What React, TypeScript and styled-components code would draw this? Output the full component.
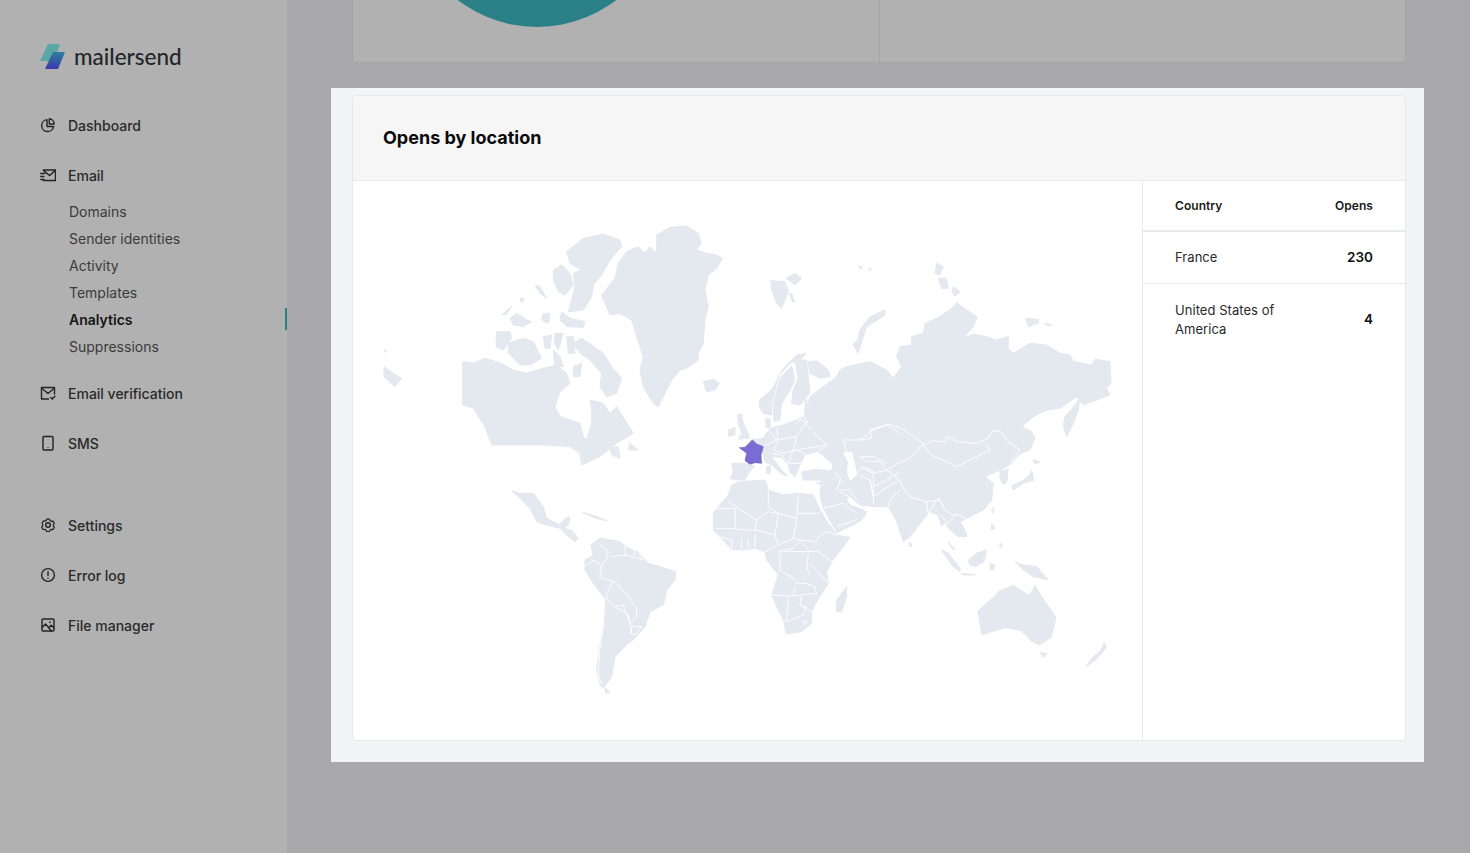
import React from 'react';
import styled, { createGlobalStyle } from 'styled-components';

const GlobalStyle = createGlobalStyle`
  html, body {
    margin: 0;
    padding: 0;
    height: 100%;
    background: #a9a9ab;
    font-family: Inter, 'Liberation Sans', sans-serif;
  }
  #root { height: 100%; }
`;

// map shapes are traced per region, each with its own offset/scale
interface Region {
  transform: string;
  land: string[];
  water?: string[];
  borders?: string[];
}

const regions: Region[] = [
  {
    // north america + greenland
    transform: 'translate(370 210) scale(0.3333)',
    land: [
      '278,455 310,460 345,445 395,460 430,480 470,490 520,475 560,465 590,490 600,520 570,545 555,590 570,620 630,640 640,680 650,690 665,640 665,600 660,570 700,580 720,610 740,590 790,670 740,700 690,740 635,765 630,730 600,710 520,705 365,705 345,650 310,595 278,585',
      '860,75 900,52 950,48 985,70 995,100 980,120 1010,130 1040,135 1058,145 1040,175 1015,195 1005,240 1015,290 1005,330 1000,400 985,430 985,450 950,475 930,480 905,510 885,550 865,590 850,580 820,530 810,480 820,440 800,380 785,330 750,310 720,315 705,280 695,255 735,205 745,160 770,125 805,110 825,130 840,110 860,130',
      '590,125 640,85 700,72 750,90 755,110 720,150 695,195 670,225 665,260 640,300 595,305 605,270 615,230 610,190 635,180 600,160',
      '635,385 665,405 700,430 725,470 755,505 740,550 710,560 690,530 695,490 660,450 630,430 610,400',
      '550,180 575,165 600,190 610,225 585,255 565,245 550,210',
      '415,400 460,385 490,395 515,445 480,465 450,465 415,430',
      '380,365 420,365 425,385 400,420 378,410',
      '420,325 440,310 470,330 485,335 460,350 430,345',
      '395,315 425,288 410,312',
      '575,305 600,325 645,335 640,352 590,350 570,330',
      '520,310 540,310 535,340 515,330',
      '520,380 545,375 540,415 525,415',
      '555,370 580,370 565,420 553,400',
      '590,380 610,378 615,430 595,430',
      '495,225 510,230 530,265 510,250',
      '450,265 462,265 455,280',
      '550,420 570,440 580,470 555,470',
      '610,470 635,460 630,500 610,500',
      '1000,515 1030,508 1048,520 1035,540 1010,545',
      '42,470 70,490 95,505 75,530 42,500',
      '42,420 50,420 48,428',
      '720,715 745,710 750,745 725,735',
      '780,700 805,720 775,720',
    ],
  },
  {
    // russia and the arctic islands
    transform: 'translate(730 210) scale(0.3333)',
    land: [
      '225,600 240,560 300,515 320,500 330,480 350,470 420,455 470,480 490,505 515,470 500,440 510,410 545,405 545,380 580,370 585,340 630,320 665,295 680,278 710,300 742,320 730,350 700,385 730,372 770,380 800,390 835,380 835,415 850,430 900,400 950,405 990,430 1020,435 1030,455 1085,465 1095,448 1140,455 1143,520 1130,535 1140,555 1060,585 1040,560 990,595 950,600 910,620 875,650 860,720 225,720',
      '465,300 420,320 390,360 385,385 370,405 385,430 395,395 410,350 465,315',
      '122,212 165,215 175,245 155,295 140,280 125,240',
      '168,205 195,190 215,205 195,225',
      '178,250 186,252 194,276 188,276',
      '385,168 397,172 392,178',
      '418,175 425,178 420,183',
      '620,160 640,170 630,195 615,190',
      '625,205 650,205 655,235 635,235',
      '670,230 690,245 675,258 665,245',
      '888,325 925,328 925,340 895,350',
      '945,340 965,345 948,346',
      '1040,580 1050,555 1045,600 1030,640 1010,680 1000,650 1005,620',
    ],
  },
  {
    // europe
    transform: 'translate(700 340) scale(0.3333)',
    land: [
      '112,225 125,222 128,245 145,280 148,295 115,298 125,280 115,250',
      '85,270 105,262 105,285 85,288',
      '178,180 215,150 250,85 290,45 320,40 300,60 270,70 235,110 215,190 215,225 190,220 178,200',
      '220,190 240,115 275,78 285,120 270,150 245,190 240,240 222,245',
      '285,60 320,60 325,110 330,160 300,195 275,190 280,150 295,115',
      '325,65 350,62 385,90 390,110 360,115 330,100',
      '198,235 212,238 210,262 198,262',
      '150,300 190,295 210,265 250,255 290,240 315,225 322,190 420,190 440,330 420,385 395,385 370,345 350,335 315,345 300,375 285,410 270,395 265,375 245,352 215,350 190,345',
      '95,370 130,370 165,378 145,400 135,420 105,420 90,415 100,395',
      '190,345 215,350 245,390 262,408 245,402 215,375 195,365',
      '305,395 350,388 405,395 440,385 450,425 405,425 350,420 310,420',
      '200,380 212,380 210,402 200,400',
      '350,428 375,428 365,435',
    ],
    water: ['318,352 340,345 355,355 380,358 396,372 396,388 340,385 308,388'],
    borders: [
      '205,270 230,300 190,320',
      '230,300 290,290 315,250 335,270',
      '230,265 235,305 220,330 250,340 290,330 380,315 355,335',
      '290,290 280,330 265,370 310,370 320,345 290,330',
      '215,340 245,345 265,370',
      '300,240 325,250 310,225 285,255',
      '340,275 380,315',
      '322,190 330,160',
      '445,355 430,300 480,300 520,270 560,255 600,280',
      '405,395 430,430',
      '420,420 410,450 455,475',
      '480,350 520,350 560,370',
      '470,400 490,380 520,395 520,440',
      '520,470 520,440 560,420 600,395',
    ],
  },
  {
    // africa + arabia
    transform: 'translate(700 480) scale(0.3333)',
    land: [
      '40,100 50,85 85,45 95,15 120,5 195,0 205,30 250,45 295,40 340,45 360,90 385,130 410,165 450,172 430,200 395,245 380,275 385,310 350,365 335,395 335,430 305,455 260,462 250,420 230,380 215,345 235,285 200,240 195,215 165,205 130,210 95,208 60,170 40,150',
      '440,320 440,350 425,395 410,395 410,360',
      '360,45 420,30 450,75 490,90 498,105 470,130 410,158 395,130 370,85',
      '360,45 365,0 450,0 470,30 460,55 420,30',
    ],
    borders: [
      '85,65 170,120 205,95 235,100',
      '205,30 205,80 235,100 290,115 295,40',
      '295,100 360,100',
      '290,115 280,175 300,180 350,185',
      '235,100 225,165 235,195 280,175',
      '170,120 165,150 130,150 95,145 45,145',
      '105,85 105,145',
      '50,85 105,85',
      '165,150 225,165',
      '60,170 95,180 95,208',
      '125,175 125,208',
      '145,175 145,205',
      '165,205 165,160',
      '195,215 235,195',
      '235,215 280,205 300,180',
      '300,180 330,215 355,215 395,245',
      '350,185 355,170 380,155 410,165',
      '240,220 250,215 330,215',
      '325,220 320,265 330,285',
      '240,270 250,280 275,290 290,310 315,310',
      '215,345 280,348 285,320',
      '225,285 240,270 240,225',
      '330,250 385,310',
      '315,310 345,320 350,345',
      '280,348 305,345 345,340',
      '265,350 260,420 250,425',
      '305,380 335,395',
      '305,345 300,375 320,380 310,405 260,425',
      '309,427 315,421 322,427 315,434 309,427',
      '370,85 430,70 470,100',
      '420,30 450,30 470,60',
      '410,140 470,120',
    ],
  },
  {
    // south and central america
    transform: 'translate(500 480) scale(0.3333)',
    land: [
      '300,175 335,180 360,185 385,205 415,215 445,250 480,260 527,275 525,300 500,330 490,375 450,395 435,440 400,480 385,490 360,515 345,530 335,590 310,625 300,615 290,570 298,510 310,440 315,355 280,310 255,270 255,240 280,225 272,195',
      '315,625 330,635 318,640',
      '35,32 60,40 100,40 130,80 140,115 180,135 195,115 210,110 205,135 190,145 215,150 235,175 225,185 200,165 180,145 140,135 110,125 90,85 60,55',
      '248,97 285,108 320,122 285,114',
    ],
    borders: [
      '300,195 325,215 320,235 300,265 305,295 345,305 385,350 410,385 410,410 390,430 370,375 340,380 320,355 318,345 340,305',
      '255,260 280,240 310,260',
      '335,230 375,225 375,195',
      '375,225 400,230 430,240 415,215',
      '315,355 310,440 298,520 295,590 305,610',
      '345,380 385,405 390,430 395,460',
      '395,440 425,440 405,465 392,460 395,440',
      '400,205 405,225',
    ],
  },
  {
    // asia
    transform: 'translate(860 400) scale(0.3333)',
    land: [
      '-165,30 -75,240 -50,240 -60,310 -30,290 0,315 50,320 85,320 110,365 130,425 150,410 205,340 210,335 235,345 245,380 255,365 265,385 295,410 320,410 320,400 300,365 330,350 370,330 395,300 400,250 375,230 420,210 455,190 480,160 510,150 525,115 515,95 485,80 520,30 570,25 560,0 -165,0',
      '515,210 522,240 490,250 460,270 455,258 490,240 510,225',
      '520,180 540,185 525,192',
      '420,210 445,205 440,245 430,255 420,235',
      '395,328 402,322 398,340',
      '395,370 405,385 395,390',
      '420,430 428,435 420,445',
      '245,450 265,460 300,505 300,515 275,495',
      '305,520 345,525 310,525',
      '325,480 350,460 380,450 372,485 345,500 330,495',
      '390,490 405,495 400,510 392,510',
      '465,485 490,495 530,500 565,540 520,530 490,510',
      '265,425 285,450 275,445',
      '150,425 156,440 148,440',
      '-10,335 20,335 5,360 -10,365',
    ],
    water: ['-51,156 -24,156 -15,189 -9,225 -30,243 -39,216 -36,186'],
    borders: [
      '190,135 220,122 255,125 265,110 290,125 350,130 385,115 395,95 420,92 445,125 480,150 460,175 455,190',
      '190,135 215,165 290,200 340,175 390,150 375,130',
      '0,120 35,115 30,90 85,72 125,85 190,130 150,175 115,190 80,210',
      '0,170 20,185 60,185 80,210 120,240 130,265 150,290 200,305 240,300 255,330 280,345 300,345 320,360',
      '425,210 445,205',
      '30,240 40,290 85,260 120,240',
      '0,225 30,240 40,290 40,315',
      '85,320 90,300 120,270',
      '200,305 205,340 235,295 250,320',
      '240,345 265,370 290,340',
      '0,200 40,220 80,210',
    ],
  },
  {
    // australia and new zealand, this crop has its own scale
    transform: 'translate(500 470) scale(0.395 0.335)',
    land: [
      '1210,420 1245,385 1265,360 1300,345 1320,360 1340,375 1355,345 1375,385 1408,440 1395,500 1365,522 1345,510 1320,480 1280,470 1220,492',
      '1368,545 1385,548 1375,560',
      '1530,515 1535,530 1510,565 1482,588 1500,560 1520,540',
    ],
  },
];

const france = '118,323 135,322 157,300 170,312 190,320 183,345 185,370 165,368 150,373 135,362 140,340';

const Page = styled.div`
  display: flex;
  height: 853px;
  overflow: hidden;
  background: #a9a9ab;
`;

const Sidebar = styled.aside`
  flex: 0 0 287px;
  box-sizing: border-box;
  padding-left: 40px;
  background: #b1b1b1;
`;

const Logo = styled.div`
  display: flex;
  align-items: center;
  gap: 9px;
  height: 100px;
  padding-top: 13px;
  box-sizing: border-box;
`;

const LogoText = styled.span`
  font-family: Lato, Inter, sans-serif;
  font-size: 22.5px;
  font-weight: 500;
  color: #22252b;
`;

const NavItem = styled.div`
  display: flex;
  align-items: center;
  gap: 12px;
  height: 50px;
  font-size: 14px;
  font-weight: 500;
  color: #2a2a2a;
`;

const NavIcon = styled.svg`
  flex: 0 0 16px;
  width: 16px;
  height: 16px;
  fill: none;
  stroke: #232323;
  stroke-width: 1.4;
  stroke-linecap: round;
  stroke-linejoin: round;
`;

const SubList = styled.div`
  margin: -2px 0 8px;
`;

const SubItem = styled.div<{ $active?: boolean }>`
  position: relative;
  height: 27px;
  line-height: 27px;
  padding-left: 29px;
  font-size: 14px;
  font-weight: ${({ $active }) => ($active ? 600 : 400)};
  color: ${({ $active }) => ($active ? '#151515' : '#3b3b3b')};

  ${({ $active }) =>
    $active &&
    `&::after {
      content: '';
      position: absolute;
      top: 2px;
      right: 0;
      width: 2px;
      height: 22px;
      background: #2b8087;
    }`}
`;

const NavGap = styled.div`
  height: 32px;
`;

const Main = styled.main`
  flex: 1;
  padding-left: 44px;
`;

const TopCard = styled.section`
  display: flex;
  box-sizing: border-box;
  width: 1054px;
  height: 63px;
  margin-left: 21px;
  background: #b1b1b1;
  border: 1px solid #a3a3a3;
  border-top: none;
  border-radius: 0 0 4px 4px;
`;

const TopCell = styled.div`
  flex: 0 0 527px;
  box-sizing: border-box;
  padding-left: 104px;
  border-right: 1px solid #a5a5a5;
`;

const Circle = styled.svg`
  display: block;
  width: 160px;
  height: 28px;
`;

const Highlight = styled.div`
  box-sizing: border-box;
  width: 1093px;
  height: 674px;
  margin-top: 25px;
  padding: 7px 18px 21px 21px;
  background: #f3f4f6;
`;

const Card = styled.section`
  display: flex;
  flex-direction: column;
  box-sizing: border-box;
  height: 646px;
  border: 1px solid #e5e7eb;
  border-radius: 4px;
  background: #fff;
  overflow: hidden;
`;

const CardHeader = styled.header`
  display: flex;
  align-items: center;
  flex: 0 0 85px;
  box-sizing: border-box;
  padding: 0 30px 2px;
  background: #f6f6f7;
  border-bottom: 1px solid #e8e9ec;
`;

const CardTitle = styled.h2`
  margin: 0;
  font-size: 18px;
  font-weight: 700;
  color: #0b0b0b;
`;

const CardBody = styled.div`
  display: flex;
  flex: 1;
  min-height: 0;
`;

const MapPane = styled.div`
  flex: 0 0 789px;
`;

const MapSvg = styled.svg`
  display: block;
  width: 789px;
  height: 560px;
`;

const Land = styled.polygon`
  fill: #e4e8ef;
  stroke: #e4e8ef;
  stroke-width: 1;
  stroke-linejoin: round;
  vector-effect: non-scaling-stroke;
`;

const Water = styled.polygon`
  fill: #fff;
`;

const Border = styled.polyline`
  fill: none;
  stroke: #fff;
  stroke-width: 0.9;
  stroke-linejoin: round;
  vector-effect: non-scaling-stroke;
`;

const France = styled.polygon`
  fill: #7b6cd3;
  stroke: #5f52ad;
  stroke-width: 0.5;
  vector-effect: non-scaling-stroke;
`;

const TablePane = styled.div`
  flex: 1;
  border-left: 1px solid #e8e9ec;
`;

const Row = styled.div<{ $height: number; $thick?: boolean }>`
  display: flex;
  align-items: center;
  justify-content: space-between;
  box-sizing: border-box;
  height: ${({ $height }) => $height}px;
  padding: 0 32px;
  border-bottom: ${({ $thick }) => ($thick ? '2px' : '1px')} solid #e8e9ec;
  font-size: 13px;
  letter-spacing: 0.05px;
  line-height: 19px;
  color: #2a2a2a;
`;

const LastRow = styled(Row)`
  border-bottom: none;
`;

const HeadCell = styled.span`
  font-size: 12px;
  font-weight: 600;
  color: #1a1a1a;
`;

const Country = styled.span`
  max-width: 120px;
`;

const Count = styled.span`
  font-size: 13.5px;
  font-weight: 600;
  color: #111;
`;

const MailerLogo = () => (
  <svg width="25" height="26" viewBox="0 0 25 26">
    <defs>
      <linearGradient id="logoLow" x1="0" y1="0" x2="0" y2="1">
        <stop offset="0" stopColor="#2b7f9c" />
        <stop offset="1" stopColor="#3a39ad" />
      </linearGradient>
    </defs>
    <polygon points="8,0 20,0 14,17 0,17" fill="#59a8a5" />
    <polygon points="13,8 25,8 18,25 5,25" fill="url(#logoLow)" />
  </svg>
);

const navIcons: Record<string, React.ReactNode> = {
  dashboard: (
    <>
      <path d="M7 2.6a6 6 0 1 0 6.6 6.9H7z" />
      <path d="M9.3 1.8a5.4 5.4 0 0 1 4.9 5.2H9.3z" />
    </>
  ),
  email: (
    <>
      <path d="M3.5 3h12v10.5h-12" />
      <path d="M3.5 3.4 9.5 8.5l6-5.1" />
      <path d="M.8 6.5h4M.8 9.5h3M.8 12.5h3" />
    </>
  ),
  verify: (
    <>
      <path d="M8.5 14H1.5V2.5h13V9" />
      <path d="M1.5 3 8 8.5 14.5 3" />
      <path d="m10.8 12.6 1.5 1.5 2.6-2.8" />
    </>
  ),
  sms: (
    <>
      <rect x="3" y="1.5" width="10" height="13.5" rx="1" />
      <path d="M8 12.6h.01" />
    </>
  ),
  settings: (
    <>
      <path d="M6.3 1.6h3.4l.6 1.7 1.8 1 1.8-.3 1.6 2.8-1.2 1.3v1.8l1.2 1.3-1.6 2.8-1.8-.3-1.8 1-.6 1.5H6.3l-.6-1.6-1.8-1-1.8.3-1.6-2.8 1.2-1.3V7.9L1 6.6l1.6-2.8 1.8.3 1.8-1z" transform="translate(1.2 .7) scale(.85)" />
      <circle cx="8" cy="8" r="2.3" />
    </>
  ),
  error: (
    <>
      <circle cx="8" cy="8" r="6.4" />
      <path d="M8 4.6v4M8 11.2h.01" />
    </>
  ),
  file: (
    <>
      <rect x="2" y="2" width="12" height="12" rx="1" />
      <path d="m2 10.5 3.5-3.5 6 7" />
      <path d="m8.8 10.4 2.4-2.2 2.8 2.6" />
      <path d="M9.6 5.2h.6" />
    </>
  ),
};

const Item = ({ icon, label }: { icon: string; label: string }) => (
  <NavItem>
    <NavIcon viewBox="0 0 16 16">{navIcons[icon]}</NavIcon>
    {label}
  </NavItem>
);

const subItems = ['Domains', 'Sender identities', 'Activity', 'Templates', 'Analytics', 'Suppressions'];

// land goes first so that no region paints over the seas or borders of another
const WorldMap = () => (
  <MapSvg viewBox="353 181 789 560">
    {regions.map((region) => (
      <g key={region.transform} transform={region.transform}>
        {region.land.map((points) => (
          <Land key={points} points={points} />
        ))}
      </g>
    ))}
    {regions.map((region) => (
      <g key={region.transform} transform={region.transform}>
        {region.water?.map((points) => (
          <Water key={points} points={points} />
        ))}
        {region.borders?.map((points) => (
          <Border key={points} points={points} />
        ))}
      </g>
    ))}
    <g transform="translate(700 340) scale(0.3333)">
      <France points={france} />
    </g>
  </MapSvg>
);

const App: React.FC = () => (
  <Page>
    <GlobalStyle />
    <Sidebar>
      <Logo>
        <MailerLogo />
        <LogoText>mailersend</LogoText>
      </Logo>
      <Item icon="dashboard" label="Dashboard" />
      <Item icon="email" label="Email" />
      <SubList>
        {subItems.map((name) => (
          <SubItem key={name} $active={name === 'Analytics'}>
            {name}
          </SubItem>
        ))}
      </SubList>
      <Item icon="verify" label="Email verification" />
      <Item icon="sms" label="SMS" />
      <NavGap />
      <Item icon="settings" label="Settings" />
      <Item icon="error" label="Error log" />
      <Item icon="file" label="File manager" />
    </Sidebar>
    <Main>
      <TopCard>
        <TopCell>
          <Circle viewBox="0 0 160 28">
            <circle cx="80" cy="-103" r="130" fill="#2b8087" />
          </Circle>
        </TopCell>
      </TopCard>
      <Highlight>
        <Card>
          <CardHeader>
            <CardTitle>Opens by location</CardTitle>
          </CardHeader>
          <CardBody>
            <MapPane>
              <WorldMap />
            </MapPane>
            <TablePane>
              <Row $height={51} $thick>
                <HeadCell>Country</HeadCell>
                <HeadCell>Opens</HeadCell>
              </Row>
              <Row $height={52}>
                <Country>France</Country>
                <Count>230</Count>
              </Row>
              <LastRow $height={71}>
                <Country>United States of America</Country>
                <Count>4</Count>
              </LastRow>
            </TablePane>
          </CardBody>
        </Card>
      </Highlight>
    </Main>
  </Page>
);

export default App;
